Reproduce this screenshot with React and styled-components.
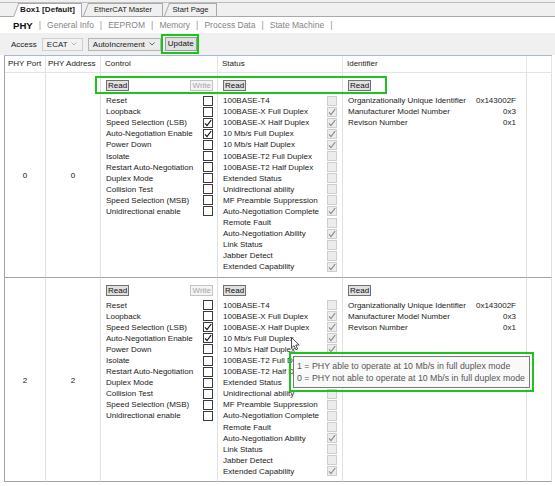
import React from "react";
import styled, { createGlobalStyle } from "styled-components";

const CONTROL = [
  ["Reset", 0],
  ["Loopback", 0],
  ["Speed Selection (LSB)", 1],
  ["Auto-Negotiation Enable", 1],
  ["Power Down", 0],
  ["Isolate", 0],
  ["Restart Auto-Negotiation", 0],
  ["Duplex Mode", 0],
  ["Collision Test", 0],
  ["Speed Selection (MSB)", 0],
  ["Unidirectional enable", 0],
];

const STATUS = [
  "100BASE-T4",
  "100BASE-X Full Duplex",
  "100BASE-X Half Duplex",
  "10 Mb/s Full Duplex",
  "10 Mb/s Half Duplex",
  "100BASE-T2 Full Duplex",
  "100BASE-T2 Half Duplex",
  "Extended Status",
  "Unidirectional ability",
  "MF Preamble Suppression",
  "Auto-Negotiation Complete",
  "Remote Fault",
  "Auto-Negotiation Ability",
  "Link Status",
  "Jabber Detect",
  "Extended Capability",
];

const IDENT = [
  ["Organizationally Unique Identifier", "0x143002F"],
  ["Manufacturer Model Number", "0x3"],
  ["Revison Number", "0x1"],
];

const PHYS = [
  { port: "0", addr: "0", status: [0, 1, 1, 1, 1, 0, 0, 0, 0, 0, 1, 0, 1, 0, 0, 1] },
  { port: "2", addr: "2", status: [0, 1, 1, 1, 1, 0, 0, 0, 0, 0, 0, 0, 1, 0, 0, 1] },
];

const SUBTABS = ["General Info", "EEPROM", "Memory", "Process Data", "State Machine"];

const Check = ({ color }) => (
  <svg width="8" height="8" viewBox="0 0 8 8">
    <path d="M1 4.3 L3 6.6 L7.2 1" fill="none" stroke={color} strokeWidth="1.2" />
  </svg>
);

const Chevron = ({ color }) => (
  <svg width="6" height="4" viewBox="0 0 6 4">
    <path d="M0.5 0.5 L3 3 L5.5 0.5" fill="none" stroke={color} strokeWidth="0.9" />
  </svg>
);

const App = () => {
  return (
    <>
      <GlobalStyle />
      <Page>
        <TabStrip>
          <Tab $active $w={63}>
            <TabLabel>Box1 [Default]</TabLabel>
          </Tab>
          <Tab $w={74}>
            <TabLabel>EtherCAT Master</TabLabel>
          </Tab>
          <Tab $w={47}>
            <TabLabel>Start Page</TabLabel>
          </Tab>
        </TabStrip>

        <SubTabs>
          <SubTab $active>PHY</SubTab>
          <Sep>|</Sep>
          {SUBTABS.map((t) => (
            <React.Fragment key={t}>
              <SubTab>{t}</SubTab>
              <Sep>|</Sep>
            </React.Fragment>
          ))}
        </SubTabs>

        <Toolbar>
          <span>Access</span>
          <Combo $w={41} $muted>
            ECAT
            <Chevron color="#b0b0b0" />
          </Combo>
          <Combo $w={73}>
            AutoIncrement
            <Chevron color="#555" />
          </Combo>
          <ToolButton>Update</ToolButton>
        </Toolbar>

        <Table>
          <HeadCell $pl={3}>PHY Port</HeadCell>
          <HeadCell $pl={2}>PHY Address</HeadCell>
          <HeadCell $pl={4}>Control</HeadCell>
          <HeadCell $pl={4}>Status</HeadCell>
          <HeadCell $pl={4}>Identifier</HeadCell>
          <HeadCell />

          {PHYS.map((phy) => (
            <React.Fragment key={phy.port}>
              <CenterCell>{phy.port}</CenterCell>
              <CenterCell>{phy.addr}</CenterCell>

              <ListCell $pr={4}>
                <ButtonRow>
                  <CellButton>Read</CellButton>
                  <CellButton disabled>Write</CellButton>
                </ButtonRow>
                {CONTROL.map(([label, on]) => (
                  <Item key={label}>
                    <span>{label}</span>
                    <Box>{on ? <Check color="#111" /> : null}</Box>
                  </Item>
                ))}
              </ListCell>

              <ListCell $pr={5}>
                <ButtonRow>
                  <CellButton>Read</CellButton>
                </ButtonRow>
                {STATUS.map((label, i) => (
                  <Item key={label}>
                    <span>{label}</span>
                    <Box $disabled>{phy.status[i] ? <Check color="#8a8a8a" /> : null}</Box>
                  </Item>
                ))}
              </ListCell>

              <ListCell $pr={10}>
                <ButtonRow>
                  <CellButton>Read</CellButton>
                </ButtonRow>
                {IDENT.map(([label, value]) => (
                  <Item key={label}>
                    <span>{label}</span>
                    <span>{value}</span>
                  </Item>
                ))}
              </ListCell>

              <BodyCell />
            </React.Fragment>
          ))}
        </Table>

        <Highlight $x={161} $y={34} $w={38} $h={20} />
        <Highlight $x={95} $y={76} $w={292} $h={18} />

        <Tooltip>
          <div>1 = PHY able to operate at 10 Mb/s in full duplex mode</div>
          <div>0 = PHY not able to operate at 10 Mb/s in full duplex mode</div>
        </Tooltip>
        <Highlight $x={289} $y={352} $w={245} $h={40} />

        <Cursor width="10" height="14" viewBox="0 0 10 14">
          <path
            d="M0.5 0.5 L0.5 11 L3 8.6 L4.9 12.8 L6.6 12 L4.8 8 L8.2 8 Z"
            fill="#fff"
            stroke="#222"
            strokeWidth="0.8"
          />
        </Cursor>
      </Page>
    </>
  );
};

export default App;

const GlobalStyle = createGlobalStyle`
  body {
    margin: 0;
    background: #fff;
    font-family: "Liberation Sans", Arial, sans-serif;
    font-size: 8px;
    color: #111;
  }
`;

const Page = styled.div`
  position: relative;
  width: 555px;
  height: 486px;
  overflow: hidden;
  background: #fff;
`;

const TabStrip = styled.div`
  box-sizing: border-box;
  height: 17px;
  display: flex;
  align-items: flex-end;
  gap: 7px;
  padding-left: 19px;
  background: linear-gradient(#f0f0f0 0 2px, #bdbdbd 2px 3px, #f0f0f0 3px);
  border-bottom: 1px solid #a9a9a9;
`;

const Tab = styled.div`
  position: relative;
  box-sizing: border-box;
  width: ${(p) => p.$w}px;
  height: ${(p) => (p.$active ? 14 : 13)}px;
  margin-bottom: ${(p) => (p.$active ? -1 : 0)}px;
  padding-right: 5px;
  text-align: center;
  white-space: nowrap;
  line-height: 12px;
  font-size: ${(p) => (p.$active ? 8.1 : 7.6)}px;
  font-weight: ${(p) => (p.$active ? "bold" : "normal")};
  color: #1a1a1a;
  background: ${(p) => (p.$active ? "#fff" : "#f0f0f0")};
  border-top: 1px solid #a9a9a9;
  border-right: 1px solid #a9a9a9;
  z-index: ${(p) => (p.$active ? 2 : 1)};

  &::before {
    content: "";
    position: absolute;
    top: -1px;
    bottom: 0;
    left: -6px;
    width: 9px;
    background: inherit;
    border-top: 1px solid #a9a9a9;
    border-left: 1px solid #a9a9a9;
    transform: skewX(-21deg);
    transform-origin: bottom left;
  }
`;

const TabLabel = styled.span`
  position: relative;
  z-index: 1;
`;

const SubTabs = styled.div`
  height: 16px;
  display: flex;
  align-items: center;
  gap: 5px;
  padding-left: 12px;
  background: #fff;
  white-space: nowrap;
`;

const SubTab = styled.span`
  font-size: ${(p) => (p.$active ? 9.6 : 8.5)}px;
  font-weight: ${(p) => (p.$active ? "bold" : "normal")};
  color: ${(p) => (p.$active ? "#111" : "#858585")};
  padding: 0 1px;
`;

const Sep = styled.span`
  font-size: 9px;
  color: #9a9a9a;
`;

const Toolbar = styled.div`
  height: 22px;
  display: flex;
  align-items: center;
  gap: 5px;
  padding-left: 11px;
  background: #f0f0f0;
  color: #222;
  white-space: nowrap;
`;

const Combo = styled.div`
  box-sizing: border-box;
  width: ${(p) => p.$w}px;
  height: 13px;
  display: flex;
  align-items: center;
  justify-content: space-between;
  padding: 0 5px 0 4px;
  background: ${(p) => (p.$muted ? "#f2f2f2" : "#ebebeb")};
  border: 1px solid ${(p) => (p.$muted ? "#cfcfcf" : "#b4b4b4")};
  color: #222;
`;

const ToolButton = styled.div`
  box-sizing: border-box;
  height: 14px;
  padding: 0 2px;
  margin-left: -1px;
  line-height: 12px;
  background: #e1e1e1;
  border: 1px solid #9a9a9a;
  color: #111;
`;

const Table = styled.div`
  box-sizing: border-box;
  margin-left: 4px;
  width: 548px;
  display: grid;
  grid-template-columns: 41px 55px 117px 125px 184px 1fr;
  border-left: 1px solid #a5a5a5;
  border-top: 1px solid #a6b9cf;
  background: #fff;
`;

const HeadCell = styled.div`
  box-sizing: border-box;
  height: 17px;
  line-height: 16px;
  padding-left: ${(p) => p.$pl || 0}px;
  white-space: nowrap;
  border-right: 1px solid #e4e4e4;
  border-bottom: 1px solid #e4e4e4;
  color: #222;
`;

const BodyCell = styled.div`
  box-sizing: border-box;
  border-right: 1px solid #e0e0e0;
  border-bottom: 1px solid #a3a3a3;
`;

const CenterCell = styled(BodyCell)`
  display: flex;
  align-items: center;
  justify-content: center;
  padding-top: 2px;
`;

const ListCell = styled(BodyCell)`
  padding: 7px ${(p) => p.$pr}px 4px 5px;
`;

const ButtonRow = styled.div`
  display: flex;
  justify-content: space-between;
  margin-bottom: 4px;
`;

const CellButton = styled.div`
  box-sizing: border-box;
  height: 11px;
  padding: 0 1px;
  line-height: 9px;
  background: ${(p) => (p.disabled ? "#f4f4f4" : "#e1e1e1")};
  border: 1px solid ${(p) => (p.disabled ? "#c4c4c4" : "#707070")};
  color: ${(p) => (p.disabled ? "#a6a6a6" : "#111")};
`;

const Item = styled.div`
  height: 11.1px;
  display: flex;
  align-items: center;
  justify-content: space-between;
  white-space: nowrap;
  color: #1a1a1a;
`;

const Box = styled.div`
  box-sizing: border-box;
  width: 10px;
  height: 10px;
  display: flex;
  align-items: center;
  justify-content: center;
  background: ${(p) => (p.$disabled ? "#ececec" : "#fff")};
  border: 1px solid ${(p) => (p.$disabled ? "#cdcdcd" : "#3c3c3c")};
`;

const Highlight = styled.div`
  position: absolute;
  box-sizing: border-box;
  left: ${(p) => p.$x}px;
  top: ${(p) => p.$y}px;
  width: ${(p) => p.$w}px;
  height: ${(p) => p.$h}px;
  border: 2.5px solid #1ec41e;
  pointer-events: none;
`;

const Tooltip = styled.div`
  position: absolute;
  box-sizing: border-box;
  left: 293px;
  top: 356px;
  width: 237px;
  height: 32px;
  padding: 3px 0 0 3px;
  background: #f9f9f9;
  border: 1px solid #7a7a7a;
  color: #575757;
  font-size: 8.8px;
  line-height: 12px;
  white-space: nowrap;
`;

const Cursor = styled.svg`
  position: absolute;
  left: 291px;
  top: 337px;
`;
